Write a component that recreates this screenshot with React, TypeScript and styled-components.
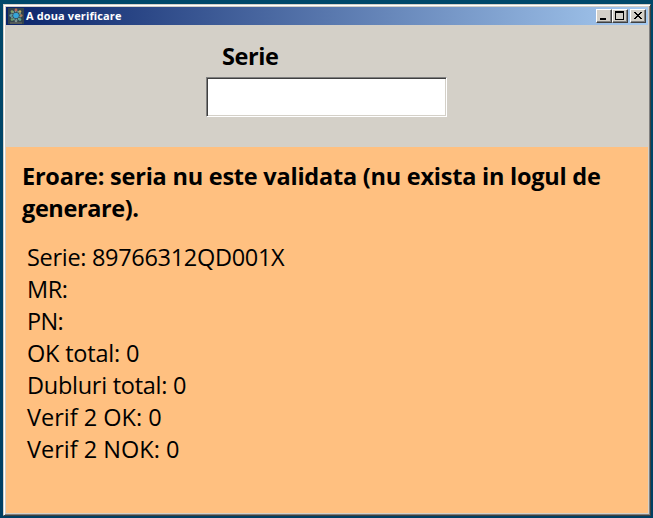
import React from "react";
import styled, { createGlobalStyle } from "styled-components";

const GlobalStyle = createGlobalStyle`
  html, body, #root { height: 100%; }
  body { margin: 0; overflow: hidden; background: #004368; }
`;

const Desktop = styled.div`
  box-sizing: border-box;
  height: 100%;
  padding: 4px 2px 2px 3px;
  background: linear-gradient(#00486a, #003f63);
  font-family: "Open Sans", "Noto Sans", sans-serif;
  color: #000;
`;

const Window = styled.main`
  box-sizing: border-box;
  height: 100%;
  display: flex;
  flex-direction: column;
  padding: 1px;
  background: #d4d0c8;
  border: 1px solid;
  border-color: #d4d0c8 #404040 #404040 #d4d0c8;
  box-shadow: inset 1px 1px #fff, inset -1px -1px #808080;
`;

const Frame = styled.div`
  flex: 1;
  min-height: 0;
  display: flex;
  flex-direction: column;
  border: 1px solid #d4d0c8;
`;

const TitleBar = styled.header`
  height: 18px;
  flex: none;
  display: flex;
  align-items: center;
  padding: 0 2px;
  background: linear-gradient(90deg, #0a246a, #a6caf0);
`;

const Title = styled.h1<{ $tracking: number }>`
  flex: 1;
  margin: 0 0 0 2px;
  color: #fff;
  font-size: 11px;
  line-height: 18px;
  font-weight: 700;
  letter-spacing: ${(p) => p.$tracking}px;
  white-space: nowrap;
`;

const Buttons = styled.div`
  display: flex;
`;

const CaptionButton = styled.button<{ $gap?: boolean }>`
  box-sizing: border-box;
  width: 16px;
  height: 14px;
  padding: 0;
  margin-left: ${(p) => (p.$gap ? 2 : 0)}px;
  display: block;
  background: #d4d0c8;
  border: 1px solid;
  border-color: #fff #404040 #404040 #fff;
  box-shadow: inset -1px -1px #808080;

  svg { display: block; }
`;

const SearchPanel = styled.section`
  height: 122px;
  flex: none;
  display: flex;
  flex-direction: column;
  padding-left: 200px;
  background: #d4d0c8;
`;

const FieldLabel = styled.label<{ $tracking: number }>`
  margin: 15px 0 5px 16px;
  font-size: 23.5px;
  line-height: 32px;
  font-weight: 700;
  letter-spacing: ${(p) => p.$tracking}px;
`;

const Field = styled.input`
  box-sizing: border-box;
  width: 241px;
  height: 40px;
  padding: 0 4px;
  border: 1px solid;
  border-color: #808080 #fff #fff #808080;
  border-radius: 0;
  outline: none;
  background: #fff;
  box-shadow: inset 1px 1px #404040, inset -1px -1px #d4d0c8;
  font: 24px/32px "Open Sans", sans-serif;
`;

const ResultPanel = styled.section`
  flex: 1;
  min-height: 0;
  padding: 13px 16px 0;
  background: #ffc080;
`;

const ErrorMessage = styled.div`
  margin-bottom: 17px;
  font-weight: 700;
`;

const Details = styled.div`
  padding-left: 5px;
`;

const Line = styled.div<{ $tracking: number }>`
  font-size: 23.5px;
  line-height: 32px;
  letter-spacing: ${(p) => p.$tracking}px;
  white-space: pre;
`;

const AppIcon = () => (
  <svg width="16" height="16" viewBox="0 0 16 16">
    <rect width="16" height="16" fill="#34444c" />
    <path d="M2 14h12v2H2z" fill="#555a58" />
    <circle cx="8" cy="7.5" r="4.4" fill="none" stroke="#6f9c9c" strokeWidth="1.8" strokeDasharray="1.8 0.9" />
    <circle cx="8" cy="7.5" r="2.8" fill="#35a5d8" />
    <circle cx="8" cy="2" r="1.4" fill="#b8655a" />
    <circle cx="12" cy="3.6" r="1.3" fill="#b8a860" />
    <circle cx="13.3" cy="7.6" r="1.3" fill="#a87858" />
    <circle cx="12" cy="11.6" r="1.3" fill="#5c9f88" />
    <circle cx="8" cy="13" r="1.3" fill="#7c9090" />
    <circle cx="4" cy="11.6" r="1.3" fill="#699b6b" />
    <circle cx="2.7" cy="7.6" r="1.3" fill="#5a9aa0" />
    <circle cx="4" cy="3.6" r="1.3" fill="#84a068" />
  </svg>
);

const Glyph = ({ d }: { d: string }) => (
  <svg width="14" height="12" viewBox="0 0 14 12" shapeRendering="crispEdges">
    <path d={d} fill="#000" fillRule="evenodd" />
  </svg>
);

const errorLines = [
  { text: "Eroare: seria nu este validata (nu exista in logul de", tracking: -0.23 },
  { text: "generare).", tracking: -0.4 },
];

const details = [
  { text: "Serie: 89766312QD001X", tracking: -0.31 },
  { text: "MR:", tracking: -0.4 },
  { text: "PN:", tracking: -0.7 },
  { text: "OK total: 0", tracking: -0.2 },
  { text: "Dubluri total: 0", tracking: -0.27 },
  { text: "Verif 2 OK: 0", tracking: 0 },
  { text: "Verif 2 NOK: 0", tracking: 0 },
];

export default function App() {
  return (
    <Desktop>
      <GlobalStyle />
      <Window>
        <Frame>
          <TitleBar>
            <AppIcon />
            <Title $tracking={0.12}>A doua verificare</Title>
            <Buttons>
              <CaptionButton aria-label="Minimize">
                <Glyph d="M3 8h6v2H3z" />
              </CaptionButton>
              <CaptionButton aria-label="Maximize">
                <Glyph d="M2 1h9v9H2zM3 3v6h7V3z" />
              </CaptionButton>
              <CaptionButton aria-label="Close" $gap>
                <Glyph d="M3 2h2v1h1v1h2v-1h1v-1h2v1h-1v1h-1v1h-1v1h1v1h1v1h1v1h-2v-1h-1v-1h-2v1h-1v1h-2v-1h1v-1h1v-1h1v-1h-1v-1h-1v-1h-1z" />
              </CaptionButton>
            </Buttons>
          </TitleBar>
          <SearchPanel>
            <FieldLabel htmlFor="serie" $tracking={-0.4}>Serie</FieldLabel>
            <Field id="serie" />
          </SearchPanel>
          <ResultPanel>
            <ErrorMessage>
              {errorLines.map((l) => (
                <Line key={l.text} $tracking={l.tracking}>{l.text}</Line>
              ))}
            </ErrorMessage>
            <Details>
              {details.map((l) => (
                <Line key={l.text} $tracking={l.tracking}>{l.text}</Line>
              ))}
            </Details>
          </ResultPanel>
        </Frame>
      </Window>
    </Desktop>
  );
}
